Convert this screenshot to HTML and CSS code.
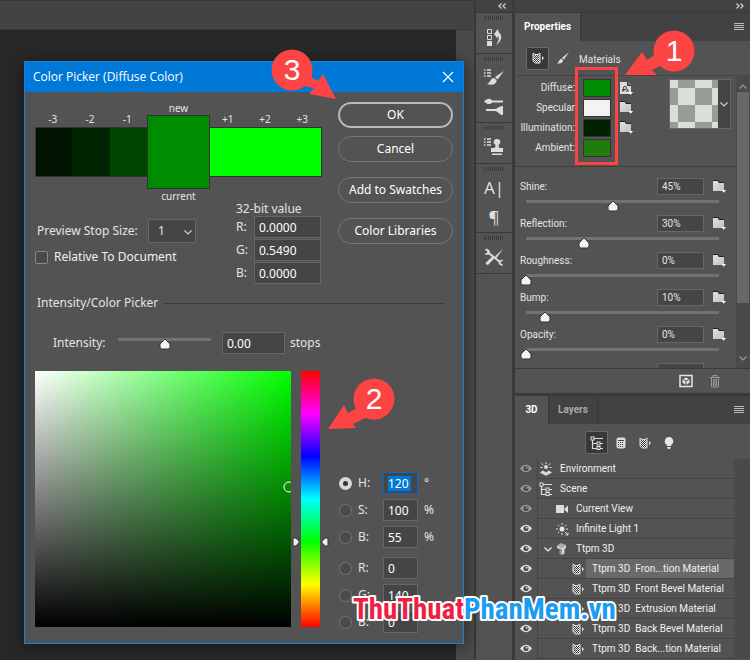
FILE: index.html
```
<!DOCTYPE html>
<html lang="en">
<head>
  <meta charset="UTF-8">
  <meta name="viewport" content="width=device-width, initial-scale=1.0">
  <title>Color Picker (Diffuse Color)</title>
  <link rel="stylesheet" href="styles.css">
</head>
<body>
  <!-- icon set -->
  <svg class="defs" aria-hidden="true">
    <defs>
      <pattern id="check" width="2" height="2" patternUnits="userSpaceOnUse">
        <rect width="2" height="2" fill="#333"/>
        <rect width="1" height="1" fill="#eee"/>
        <rect x="1" y="1" width="1" height="1" fill="#eee"/>
      </pattern>
      <linearGradient id="fold" x1="0" y1="0" x2="1" y2="1">
        <stop offset="0" stop-color="#e2e2e2"/>
        <stop offset="1" stop-color="#c0c0c0"/>
      </linearGradient>
      <symbol id="folder" viewBox="0 0 14 14">
        <path d="M1 1h5l1 2h5v8H1z" fill="url(#fold)"/>
        <path d="M1 .5h5l1 2h5" fill="none" stroke="#222"/>
        <path d="M9.500 10h4.500l-2.200 2.800z" fill="#fff"/>
      </symbol>
      <symbol id="texture" viewBox="0 0 14 14">
        <path d="M1 1h8l3 3v9H1z" fill="#dcdcdc"/>
        <path d="M8.500 1v3.500H12" fill="#555" stroke="#333"/>
        <circle cx="6" cy="7" r="1.600" fill="none" stroke="#444"/>
        <rect x="3" y="8" width="2.500" height="2.500" fill="#555"/>
        <path d="M7 10.500l1.500-3 1.500 3z" fill="#444"/>
        <path d="M9.500 11h4.500l-2.200 2.800z" fill="#fff"/>
      </symbol>
      <symbol id="material" viewBox="0 0 14 14">
        <path d="M2 2l2 1.500h3L9 2v10H4L2 10z" fill="url(#check)" stroke="#ddd"/>
        <path d="M11 5l2 2-2 2.500z" fill="#ddd"/>
      </symbol>
      <symbol id="mesh" viewBox="0 0 14 14">
        <rect x="2.500" y="1.500" width="9" height="11" rx="2" fill="#ddd"/>
        <path d="M4 4.500h6" stroke="#444"/>
        <path d="M4 6h1v1H4zM6 6h1v1H6zM8 6h1v1H8zM4 8h1v1H4zM6 8h1v1H6zM8 8h1v1H8zM4 10h1v1H4zM6 10h1v1H6zM8 10h1v1H8z" fill="#444"/>
      </symbol>
      <symbol id="bulb" viewBox="0 0 14 14">
        <path d="M7 1a4.200 4.200 0 0 0-2.500 7.600L5 10h4l.5-1.400A4.200 4.200 0 0 0 7 1zM5 11h4l-1 2H6z" fill="#e6e6e6"/>
      </symbol>
      <symbol id="tree" viewBox="0 0 14 14">
        <path d="M2.500 3.500v9H7M2.500 7.500H7M4 2.500h9M10 7.500h3M10 12.500h3" stroke="#ddd" fill="none" stroke-width="1.200"/>
        <rect x="1" y="1" width="3" height="3" fill="#444" stroke="#ddd"/>
        <rect x="7" y="6" width="3" height="3" fill="#444" stroke="#ddd"/>
        <rect x="7" y="10.500" width="3" height="3" fill="#444" stroke="#ddd"/>
      </symbol>
      <symbol id="brush" viewBox="0 0 14 14">
        <path d="M13 1L6 7l1.800 1.800zM5.300 7.700c-2.300.3-1.500 3-4.300 4.600 3 .8 6-.3 6-3z" fill="#ddd"/>
      </symbol>
      <symbol id="env" viewBox="0 0 14 14">
        <circle cx="7" cy="5" r="2" fill="#ddd"/>
        <path d="M7 0v2M2.500 1.500l1.800 1.500M11.500 1.500L9.700 3M1.500 5.500h2M10.500 5.500h2" stroke="#ddd"/>
        <path d="M1 10.500l3-2 3 2 3-2 3 2-6 3.200z" fill="#ddd"/>
      </symbol>
      <symbol id="camera" viewBox="0 0 14 14">
        <path d="M1 3h8v8H1zM9.500 6.500l3.500-3v7.500l-3.500-3z" fill="#ddd"/>
      </symbol>
      <symbol id="sun" viewBox="0 0 14 14">
        <circle cx="7" cy="7" r="2.500" fill="#e6e6e6"/>
        <path d="M7 1v2M7 11v2M1 7h2M11 7h2M2.800 2.800l1.400 1.400M11.200 2.800L9.800 4.200M2.800 11.200l1.400-1.400M9.800 9.800L13 13M13 10.500V13h-2.500" stroke="#ddd" fill="none"/>
      </symbol>
      <symbol id="extrude" viewBox="0 0 14 14">
        <path d="M2 3.500L6 1l5 2-4 3z" fill="#aaa"/>
        <path d="M2 3.500L7 6l4-3v3l-1.500 1v4.500L6.500 13V7.500L2 6z" fill="#d8d8d8"/>
        <path d="M4.500 7l2 .8V13l-2-1z" fill="#999"/>
      </symbol>
      <symbol id="eye" viewBox="0 0 14 10">
        <path d="M1 5q6-7.500 12 0-6 7.500-12 0z" fill="currentColor"/>
        <circle cx="7" cy="5" r="2.500" fill="#444"/>
        <circle cx="7.600" cy="4.300" r="1" fill="currentColor"/>
      </symbol>
      <symbol id="chevron" viewBox="0 0 10 10">
        <path d="M1.500 3.500L5 7l3.500-3.500" fill="none" stroke="currentColor" stroke-width="1.200"/>
      </symbol>
      <symbol id="arrows" viewBox="0 0 8 6">
        <path d="M.5.5L3 3 .5 5.500M4.500.5L7 3 4.500 5.500" fill="none" stroke="#ccc" stroke-width="1.300"/>
      </symbol>
      <symbol id="menu" viewBox="0 0 10 8">
        <path d="M0 .5h10M0 2.500h10M0 4.500h10M0 6.500h10" stroke="#bbb"/>
      </symbol>
      <symbol id="history" viewBox="0 0 20 20">
        <path d="M3.500 2.500h4v4h-4zM3.500 8.500h4v4h-4z" fill="none" stroke="#ddd"/>
        <path d="M3 14h5v5H3z" fill="#ddd"/>
        <path d="M10 7l4-5 .5 3c4.500 3.500 3.500 9-2.500 13 3-4.500 3.500-7.500 2-9.500l-.5 3z" fill="#ddd"/>
      </symbol>
      <symbol id="brushes" viewBox="0 0 20 20">
        <path d="M0 2h1.500M3 2h4M0 5h1.500M3 5h4M0 8h1.500M3 8h4" stroke="#ddd" stroke-width="1.300"/>
        <path d="M20 3l-9 6 2.500 2.500zM10 10c-4 0-3 4.500-7 6 5 2 10 0 9.500-4z" fill="#ddd"/>
      </symbol>
      <symbol id="mixer" viewBox="0 0 20 20">
        <path d="M0 4.500c3-3 5-3.500 8-1.500v3C5 8 3 7 0 4.500zM8 3.500h11v2H8zM2 12h9v2H2zM11 12c2 0 4-3 8-3v9c-4 0-5-4-8-4z" fill="#ddd"/>
      </symbol>
      <symbol id="stamp" viewBox="0 0 20 20">
        <path d="M0 2h1.500M3 2h4M0 5h1.500M3 5h4M0 8h1.500M3 8h4" stroke="#ddd" stroke-width="1.300"/>
        <path d="M13 2a3 3 0 0 1 2 5.500c-1 1 0 3.500 1 3.500h3v4H7v-4h3c1.500 0 2-2.500 1-3.500A3 3 0 0 1 13 2zM8 16.500h10V18H8z" fill="#ddd"/>
      </symbol>
      <symbol id="tools" viewBox="0 0 20 20">
        <path d="M4 5.500l12 9.500" stroke="#ddd" stroke-width="2" fill="none"/>
        <path d="M19 2l-8 7.500 1.500 1.500zM10.500 11l-2-1.500L2 15.500c-1 1 1 3 2.500 2z" fill="#ddd"/>
        <path d="M1 2.500l2.500 1.500v2L1 7C4 8.500 6 6.500 5.500 4.500 5 2.500 3 1.500 1 2.500zM19 13.500l-2.500 1v2l2.500 1.500c-2.500 1-4.500-1-4-2.500.5-2 2.500-3 4-2z" fill="#ddd" stroke="#ddd" stroke-width=".6"/>
      </symbol>
    </defs>
  </svg>

  <main class="app">
    <section class="workspace">
      <div class="options-bar"></div>
      <div class="canvas"><div class="canvas-scroll"></div></div>
    </section>

    <nav class="dock">
      <div class="strip"><svg class="flip"><use href="#arrows"/></svg></div>
      <div class="dock-group">
        <button title="History"><svg><use href="#history"/></svg></button>
      </div>
      <div class="dock-group two">
        <button title="Brush Settings"><svg><use href="#brushes"/></svg></button>
        <button title="Brushes"><svg><use href="#mixer"/></svg></button>
      </div>
      <div class="dock-group">
        <button title="Clone Source"><svg><use href="#stamp"/></svg></button>
      </div>
      <div class="dock-group two">
        <button title="Character">A|</button>
        <button title="Paragraph">¶</button>
      </div>
      <div class="dock-group">
        <button title="Tool Presets"><svg><use href="#tools"/></svg></button>
      </div>
    </nav>

    <aside class="panels">
      <div class="strip"><svg><use href="#arrows"/></svg></div>

      <section class="panel properties">
        <div class="tabs">
          <button class="tab active">Properties</button>
          <button class="menu" title="Menu"><svg><use href="#menu"/></svg></button>
        </div>
        <div class="tools">
          <button class="tool on" title="Material"><svg><use href="#material"/></svg></button>
          <button class="tool" title="Brush"><svg><use href="#brush"/></svg></button>
          <span class="tools-title">Materials</span>
        </div>
        <div class="scroll-area">
          <div class="scroll-content">
            <div class="materials">
              <div class="colors">
                <span class="name">Diffuse:</span><button class="swatch diffuse" title="Diffuse"></button><svg class="ico"><use href="#texture"/></svg>
                <span class="name">Specular</span><button class="swatch specular" title="Specular"></button><svg class="ico"><use href="#folder"/></svg>
                <span class="name">Illumination:</span><button class="swatch illumination" title="Illumination"></button><svg class="ico"><use href="#folder"/></svg>
                <span class="name">Ambient:</span><button class="swatch ambient" title="Ambient"></button>
              </div>
              <button class="preset" title="Material presets">
                <span class="preset-thumb"></span>
                <svg class="chev"><use href="#chevron"/></svg>
              </button>
            </div>
            <div class="sliders">
              <div class="slider">
                <label for="shine">Shine:</label><input type="text" value="45%" aria-label="Shine value"><svg class="ico"><use href="#folder"/></svg>
                <input type="range" id="shine" value="45">
              </div>
              <div class="slider">
                <label for="reflection">Reflection:</label><input type="text" value="30%" aria-label="Reflection value"><svg class="ico"><use href="#folder"/></svg>
                <input type="range" id="reflection" value="30">
              </div>
              <div class="slider">
                <label for="roughness">Roughness:</label><input type="text" value="0%" aria-label="Roughness value"><svg class="ico"><use href="#folder"/></svg>
                <input type="range" id="roughness" value="0">
              </div>
              <div class="slider">
                <label for="bump">Bump:</label><input type="text" value="10%" aria-label="Bump value"><svg class="ico"><use href="#folder"/></svg>
                <input type="range" id="bump" value="10">
              </div>
              <div class="slider">
                <label for="opacity">Opacity:</label><input type="text" value="0%" aria-label="Opacity value"><svg class="ico"><use href="#folder"/></svg>
                <input type="range" id="opacity" value="0">
              </div>
              <div class="slider">
                <label></label><input type="text" aria-label="Next value">
              </div>
            </div>
          </div>
          <div class="scrollbar">
            <svg class="chev up"><use href="#chevron"/></svg>
            <div class="scroll-thumb"></div>
            <svg class="chev"><use href="#chevron"/></svg>
          </div>
        </div>
        <div class="panel-foot">
          <button title="Render">
            <svg viewBox="0 0 14 14"><rect x="1" y="1.500" width="12" height="11" fill="none" stroke="#e6e6e6" stroke-width="1.500"/><path d="M7 3.500l3.500 1.700v3.600L7 11 3.500 8.800V5.200z" fill="#e6e6e6"/><path d="M4 5.500l3 1.300 3-1.300M7 7v4" stroke="#555" fill="none"/></svg>
          </button>
          <button title="Delete">
            <svg viewBox="0 0 14 14"><path d="M2 3.500h10M5 3V1.500h4V3M3.500 4v9h7V4M5.500 5v7M7 5v7M8.500 5v7" fill="none" stroke="#999"/></svg>
          </button>
        </div>

        <div class="mark-box"></div>
        <svg class="callout callout-1" viewBox="0 0 72 68">
          <path d="M1 52L18 29l5 8 14-9 6 12-15 7 5 5z"/>
          <circle cx="50" cy="28" r="20.500"/>
          <text x="50" y="38">1</text>
        </svg>
      </section>

      <section class="panel layers-3d">
        <div class="tabs">
          <button class="tab active">3D</button>
          <button class="tab">Layers</button>
          <button class="menu" title="Menu"><svg><use href="#menu"/></svg></button>
        </div>
        <div class="tools filters">
          <button class="tool on" title="Scene"><svg><use href="#tree"/></svg></button>
          <button class="tool" title="Meshes"><svg><use href="#mesh"/></svg></button>
          <button class="tool" title="Materials"><svg><use href="#material"/></svg></button>
          <button class="tool" title="Lights"><svg><use href="#bulb"/></svg></button>
        </div>
        <div class="tree">
          <ul>
            <li class="dim"><svg class="eye"><use href="#eye"/></svg><div class="item"><svg><use href="#env"/></svg>Environment</div></li>
            <li class="dim"><svg class="eye"><use href="#eye"/></svg><div class="item"><svg><use href="#tree"/></svg>Scene</div></li>
            <li class="dim"><svg class="eye"><use href="#eye"/></svg><div class="item level-1"><svg><use href="#camera"/></svg>Current View</div></li>
            <li><svg class="eye"><use href="#eye"/></svg><div class="item level-1"><svg><use href="#sun"/></svg>Infinite Light 1</div></li>
            <li><svg class="eye"><use href="#eye"/></svg><div class="item group"><svg><use href="#chevron"/></svg><svg><use href="#extrude"/></svg>Ttpm 3D</div></li>
            <li class="selected"><svg class="eye"><use href="#eye"/></svg><div class="item level-2"><svg><use href="#material"/></svg><span>Ttpm 3D&nbsp; Fron...tion Material</span></div></li>
            <li><svg class="eye"><use href="#eye"/></svg><div class="item level-2"><svg><use href="#material"/></svg><span>Ttpm 3D&nbsp; Front Bevel Material</span></div></li>
            <li><svg class="eye"><use href="#eye"/></svg><div class="item level-2"><svg><use href="#material"/></svg><span>Ttpm 3D&nbsp; Extrusion Material</span></div></li>
            <li><svg class="eye"><use href="#eye"/></svg><div class="item level-2"><svg><use href="#material"/></svg><span>Ttpm 3D&nbsp; Back Bevel Material</span></div></li>
            <li><svg class="eye"><use href="#eye"/></svg><div class="item level-2"><svg><use href="#material"/></svg><span>Ttpm 3D&nbsp; Back...tion Material</span></div></li>
          </ul>
          <div class="tree-scroll"></div>
        </div>
      </section>
    </aside>

    <form class="dialog">
      <header class="title-bar">
        <h1>Color Picker (Diffuse Color)</h1>
        <button type="button" title="Close">
          <svg viewBox="0 0 12 12"><path d="M1 1l10 10M11 1L1 11" stroke="#fff" stroke-width="1.200"/></svg>
        </button>
      </header>

      <div class="dialog-body">
        <div class="top">
          <div class="settings">
            <div class="ladder">
              <div class="step"><span>-3</span><i class="m3"></i></div>
              <div class="step"><span>-2</span><i class="m2"></i></div>
              <div class="step"><span>-1</span><i class="m1"></i></div>
              <div class="current"><span>new</span><i></i><span>current</span></div>
              <div class="step"><span>+1</span><i></i></div>
              <div class="step"><span>+2</span><i></i></div>
              <div class="step last"><span>+3</span><i></i></div>
            </div>
            <div class="below">
              <div class="stop-size">
                <div class="line">
                  <label for="stop">Preview Stop Size:</label>
                  <div class="select"><select id="stop"><option>1</option></select><svg class="chev"><use href="#chevron"/></svg></div>
                </div>
                <label class="relative"><input type="checkbox">Relative To Document</label>
              </div>
              <div class="bits">
                <span>32-bit value</span>
                <label>R:<input type="text" value="0.0000"></label>
                <label>G:<input type="text" value="0.5490"></label>
                <label>B:<input type="text" value="0.0000"></label>
              </div>
            </div>
          </div>
          <div class="buttons">
            <button type="button" class="primary">OK</button>
            <button type="button">Cancel</button>
            <button type="button" class="apart">Add to Swatches</button>
            <button type="button" class="apart">Color Libraries</button>
          </div>
        </div>

        <h2>Intensity/Color Picker</h2>
        <div class="intensity">
          <label for="intensity">Intensity:</label>
          <input type="range" id="intensity" value="50">
          <input type="text" value="0.00" aria-label="Stops">
          <span>stops</span>
        </div>

        <div class="picker">
          <div class="field"><svg viewBox="0 0 12 12"><circle cx="6" cy="6" r="5" fill="none" stroke="#fff"/></svg></div>
          <div class="hue">
            <svg class="pointer left" viewBox="0 0 8 10"><path d="M1 1h3l3.500 4L4 9H1z" fill="#eee" stroke="#333"/></svg>
            <svg class="pointer right" viewBox="0 0 8 10"><path d="M7 1H4L.5 5 4 9h3z" fill="#eee" stroke="#333"/></svg>
          </div>
          <div class="channels">
            <div class="channel"><input type="radio" name="ch" id="h" checked><label for="h">H:</label><input type="text" class="focus" value="120" aria-label="Hue"><span>°</span></div>
            <div class="channel"><input type="radio" name="ch" id="s"><label for="s">S:</label><input type="text" value="100" aria-label="Saturation"><span>%</span></div>
            <div class="channel"><input type="radio" name="ch" id="v"><label for="v">B:</label><input type="text" value="55" aria-label="Brightness"><span>%</span></div>
            <div class="channel rgb"><input type="radio" name="ch" id="r"><label for="r">R:</label><input type="text" value="0" aria-label="Red"></div>
            <div class="channel"><input type="radio" name="ch" id="g"><label for="g">G:</label><input type="text" value="140" aria-label="Green"></div>
            <div class="channel"><input type="radio" name="ch" id="b"><label for="b">B:</label><input type="text" value="0" aria-label="Blue"></div>
          </div>
        </div>
      </div>

      <svg class="callout callout-3" viewBox="0 0 68 54">
        <path d="M66 51L53 26l-5 7-15-9-5 13 16 3-5 6z"/>
        <circle cx="22" cy="22" r="20.500"/>
        <text x="22" y="32">3</text>
      </svg>
      <svg class="callout callout-2" viewBox="0 0 70 54">
        <path d="M2 51l16-24 4 8 12-7 7 11-14 7 3 4z"/>
        <circle cx="48" cy="21" r="20.500"/>
        <text x="48" y="31">2</text>
      </svg>
    </form>

    <svg class="watermark" viewBox="0 0 280 40">
      <text x="3" y="29"><tspan class="wm-red">ThuThuat</tspan><tspan class="wm-blue">PhanMem.vn</tspan></text>
    </svg>
  </main>
</body>
</html>
```
FILE: styles.css
```
*{
  box-sizing: border-box;
  margin: 0;
  padding: 0;
}

body{
  background: #282828;
  color: #e4e4e4;
  font: 10px/14px Roboto, "Liberation Sans", sans-serif;
}

button, input, select{
  font: inherit;
  color: inherit;
  background: none;
  border: 0;
}

svg{
  display: block;
  flex: none;
}

.defs{
  position: absolute;
  width: 0;
  height: 0;
}

.app{
  position: relative;
  display: flex;
  min-height: 100vh;
  overflow: hidden;
}

/* workspace */
.workspace{
  flex: 1;
  display: flex;
  flex-direction: column;
}

.options-bar{
  height: 30px;
  background: #434343;
  border-top: 1px solid #353535;
  border-bottom: 1px solid #383838;
}

.canvas{
  flex: 1;
  display: flex;
  justify-content: flex-end;
}

.canvas-scroll{
  width: 18px;
  background: #4a4a4a;
}

/* icon dock */
.dock{
  width: 41px;
  background: #535353;
  border-left: 2px solid #383838;
  border-right: 3px solid #3a3a3a;
}

.strip{
  display: flex;
  align-items: center;
  justify-content: flex-end;
  height: 13px;
  padding-right: 6px;
  background: #424242;
  border-bottom: 1px solid #383838;
}

.strip svg{
  width: 8px;
  height: 6px;
}

.flip{
  transform: scaleX(-1);
}

.dock-group{
  display: flex;
  flex-direction: column;
  align-items: center;
  gap: 5px;
  padding: 12px 0 4px;
  border-bottom: 1px solid #383838;
  background: repeating-linear-gradient(to right, #3c3c3c 0 1px, transparent 1px 2px) center 3px / 20px 4px no-repeat;
}

.dock-group.two{
  padding-bottom: 3px;
}

.dock-group button{
  height: 24px;
  color: #ddd;
  font: 17px/20px "Noto Sans", sans-serif;
}

.dock-group svg{
  width: 20px;
  height: 20px;
}

/* panels */
.panels{
  width: 235px;
  background: #535353;
}

.panel{
  position: relative;
}

.tabs{
  display: flex;
  height: 28px;
  background: #424242;
}

.tab{
  min-width: 34px;
  padding: 0 9px;
  color: #aaa;
  font-weight: bold;
  border-right: 1px solid #383838;
}

.tab.active{
  background: #535353;
  color: #fff;
}

.menu{
  margin-left: auto;
  padding: 0 6px;
}

.menu svg{
  width: 10px;
  height: 8px;
}

.tools{
  display: flex;
  align-items: center;
  gap: 2px;
  height: 34px;
  padding: 0 11px;
}

.tool{
  width: 23px;
  height: 23px;
  border-radius: 2px;
  display: flex;
  align-items: center;
  justify-content: center;
}

.tool.on{
  background: #383838;
  border: 1px solid #6a6a6a;
}

.tool svg{
  width: 14px;
  height: 14px;
}

.tools-title{
  padding: 4px 0 0 3px;
}

.ico{
  width: 14px;
  height: 14px;
}

.chev{
  width: 10px;
  height: 10px;
  color: #ccc;
}

.scroll-area{
  display: flex;
  height: 293px;
}

.scroll-content{
  flex: 1;
  overflow: hidden;
  border-top: 1px solid #444;
}

.materials{
  display: flex;
  justify-content: space-between;
  height: 91px;
  padding: 3px 5px 0;
  border-bottom: 1px solid #414141;
}

.colors{
  display: grid;
  grid-template-columns: 55px 28px 14px;
  grid-auto-rows: 18px;
  column-gap: 8px;
  row-gap: 2px;
  align-items: center;
  align-content: start;
}

.name{
  text-align: right;
  white-space: nowrap;
}

.swatch{
  height: 18px;
  border: 1px solid #333;
}

.diffuse{ background: #008c00; }
.specular{ background: #f3f3f3; }
.illumination{ background: #002000; }
.ambient{ background: #217c0e; }

.preset{
  display: flex;
  align-items: center;
  gap: 1px;
  width: 62px;
  height: 50px;
  background: #444;
  border: 1px solid #666;
}

.preset-thumb{
  width: 48px;
  height: 48px;
  background: conic-gradient(#969d96 25%, #d8e0d8 0 50%, #969d96 0 75%, #d8e0d8 0) 8px 8px / 34px 34px;
}

.sliders{
  padding: 11px 10px 0 5px;
}

.slider{
  display: grid;
  grid-template-columns: 1fr 47px 14px;
  column-gap: 8px;
  align-items: center;
  height: 37px;
  align-content: start;
}

.slider input[type=text]{
  height: 17px;
  padding-left: 4px;
  background: #454545;
  border: 1px solid #666;
}

input[type=range]{
  appearance: none;
  height: 15px;
  background: linear-gradient(#727272, #727272) center top / calc(100% - 12px) 3px no-repeat;
}

.slider input[type=range]{
  grid-column: 1 / -1;
  margin: 5px 0 0;
  width: 205px;
}

input[type=range]::-webkit-slider-runnable-track{
  height: 15px;
}

input[type=range]::-webkit-slider-thumb{
  appearance: none;
  width: 12px;
  height: 12px;
  background: url("data:image/svg+xml,%3Csvg xmlns='http://www.w3.org/2000/svg' viewBox='0 0 12 12'%3E%3Cpath d='M6 1L11 6v3q0 2-2 2H3q-2 0-2-2V6z' fill='%23f2f2f2' stroke='%23333'/%3E%3C/svg%3E");
}

.scrollbar{
  width: 14px;
  display: flex;
  flex-direction: column;
  align-items: center;
  padding: 7px 0 5px;
  background: #4a4a4a;
}

.scrollbar .chev{
  color: #999;
}

.scrollbar .up{
  transform: rotate(180deg);
}

.scroll-thumb{
  width: 12px;
  height: 211px;
  margin-bottom: auto;
  background: #686868;
}

.panel-foot{
  display: flex;
  justify-content: flex-end;
  align-items: center;
  gap: 15px;
  height: 25px;
  padding-right: 28px;
  border-top: 1px solid #3a3a3a;
}

.panel-foot svg{
  width: 14px;
  height: 14px;
}

/* 3D list */
.layers-3d{
  border-top: 3px solid #3a3a3a;
}

.layers-3d .tool:nth-child(n+2){
  width: 22px;
}

.filters{
  height: 35px;
  justify-content: center;
  padding: 2px 0 0;
}

.tree{
  display: flex;
}

.tree ul{
  flex: 1;
  list-style: none;
}

.tree-scroll{
  width: 16px;
  background: #4a4a4a;
}

.tree li{
  display: flex;
  align-items: stretch;
  height: 20px;
}

.eye{
  width: 14px;
  height: 19px;
  margin: 0 4px;
  color: #e0e0e0;
}

.dim .eye{
  color: #999;
}

.item{
  flex: 1;
  display: flex;
  align-items: center;
  gap: 7px;
  padding-left: 1px;
  border-left: 1px solid #444;
  border-bottom: 1px solid #454545;
  color: #f0f0f0;
  white-space: nowrap;
}

.item svg{
  width: 14px;
  height: 14px;
}

.level-1{ padding-left: 17px; }

.group{
  padding-left: 5px;
}

.group svg:first-child{
  width: 10px;
  margin-right: -5px;
}

.level-2{
  padding-left: 33px;
  gap: 1px;
}

.level-2 span{
  flex: 1;
  align-self: stretch;
  padding-left: 6px;
  line-height: 19px;
}

.selected span{
  background: #696969;
}

/* dialog */
.dialog{
  position: absolute;
  left: 24px;
  top: 61px;
  width: 440px;
  border: 1px solid #1681dc;
  background: #535353;
  box-shadow: 0 2px 14px rgba(0, 0, 0, .5);
  font: 12px/16px "Noto Sans", "Open Sans", sans-serif;
}

.title-bar{
  display: flex;
  justify-content: space-between;
  align-items: center;
  height: 30px;
  padding: 0 9px 0 8px;
  background: #0078d7;
  color: #fff;
}

.title-bar h1{
  font: 12px/16px "Open Sans", "Noto Sans", sans-serif;
}

.title-bar svg{
  width: 12px;
  height: 12px;
}

.dialog-body{
  padding: 9px 10px 10px;
}

.top{
  display: flex;
  gap: 16px;
}

.settings{
  width: 287px;
}

.ladder{
  display: flex;
  align-items: center;
  font-size: 10px;
  line-height: 14px;
  text-align: center;
}

.step{
  flex: 1;
  padding-bottom: 16px;
}

.step span{
  display: block;
  height: 16px;
  padding-right: 2px;
  line-height: 16px;
}

.step i{
  display: block;
  height: 50px;
  background: #0f0;
  border: 1px solid #333;
  border-width: 1px 0;
}

.last i{
  border-right-width: 1px;
}

.step .m3{ background: #001200; border-left-width: 1px; }
.step .m2{ background: #002400; }
.step .m1{ background: #004600; }

.current{
  width: 63px;
}

.current span{
  display: block;
  height: 14px;
}

.current i{
  display: block;
  height: 74px;
  background: #008c00;
  border: 1px solid #333;
}

.below{
  display: flex;
  justify-content: space-between;
}

.stop-size{
  padding-top: 16px;
}

.line{
  display: flex;
  align-items: center;
  justify-content: space-between;
  width: 161px;
  padding-left: 2px;
}

.select{
  position: relative;
}

.select select{
  appearance: none;
  display: block;
  width: 48px;
  height: 24px;
  padding-left: 9px;
  background: #454545;
  border: 1px solid #666;
  border-radius: 2px;
}

.select .chev{
  position: absolute;
  right: 3px;
  top: 8px;
  pointer-events: none;
}

.relative{
  display: flex;
  align-items: center;
  gap: 6px;
  margin-top: 6px;
  color: #f0f0f0;
}

.relative input{
  appearance: none;
  width: 13px;
  height: 13px;
  border: 1px solid #8a8a8a;
  border-radius: 2px;
  background: #4a4a4a;
}

.bits{
  display: flex;
  flex-direction: column;
  gap: 1px;
  width: 85px;
  margin-right: 1px;
}

.bits span{
  line-height: 12px;
}

.bits label{
  display: flex;
  align-items: center;
  justify-content: space-between;
}

.bits input{
  width: 67px;
}

.dialog input[type=text]{
  height: 22px;
  padding-left: 4px;
  background: #454545;
  border: 1px solid #666;
  color: #fff;
}

.buttons{
  flex: 1;
  display: flex;
  flex-direction: column;
  gap: 8px;
  padding-top: 1px;
}

.buttons button{
  height: 26px;
  border: 1px solid #757575;
  border-radius: 13px;
  color: #fff;
}

.buttons .primary{
  border: 2px solid #b8b8b8;
}

.buttons .apart{
  margin-top: 7px;
}

.dialog h2{
  display: flex;
  align-items: center;
  gap: 5px;
  margin: 11px 9px 0 2px;
  font-size: 12px;
  font-weight: normal;
}

.dialog h2::after{
  content: "";
  flex: 1;
  border-top: 1px solid #3e3e3e;
}

.intensity{
  display: flex;
  align-items: center;
  gap: 5px;
  margin: 21px 0 17px 18px;
}

.intensity label{
  width: 54px;
}

.intensity input[type=range]{
  width: 105px;
  margin-top: 5px;
}

.intensity input[type=text]{
  width: 63px;
}

.picker{
  display: flex;
  align-items: flex-start;
}

.field{
  position: relative;
  width: 256px;
  height: 256px;
  overflow: hidden;
  background: linear-gradient(to top, #000, transparent), linear-gradient(to right, #fff, #0f0);
}

.field svg{
  position: absolute;
  right: -4px;
  top: 110px;
  width: 12px;
  height: 12px;
}

.hue{
  position: relative;
  width: 19px;
  height: 256px;
  margin: 0 19px 0 10px;
  background: linear-gradient(#f00, #f0f, #00f, #0ff, #0f0, #ff0, #f00);
}

.pointer{
  position: absolute;
  top: 166px;
  width: 8px;
  height: 10px;
}

.left{ right: 20px; }
.right{ left: 20px; }

.channels{
  display: flex;
  flex-direction: column;
  gap: 5px;
  padding-top: 101px;
}

.channel{
  display: flex;
  align-items: center;
}

.channel.rgb{
  margin-top: 4px;
}

.channel label{
  width: 25px;
  margin-left: 6px;
}

.channel input[type=text]{
  width: 35px;
}

.channel span{
  margin-left: 6px;
}

.channel input[type=radio]{
  appearance: none;
  width: 13px;
  height: 13px;
  border: 1px solid #777;
  border-radius: 50%;
  background: #4a4a4a;
}

.channel input[type=radio]:checked{
  border: 4px solid #d8d8d8;
  background: #333;
}

.dialog .channel .focus{
  border: 1px solid #0a64d8;
  background: linear-gradient(#0078d7, #0078d7) 4px center / 23px 15px no-repeat #454545;
}

/* callouts */
.mark-box{
  position: absolute;
  left: 60px;
  top: 54px;
  width: 43px;
  height: 98px;
  border: 3px solid #fc4444;
}

.callout{
  position: absolute;
  fill: #fc4444;
}

.callout text{
  fill: #fff;
  font: 30px "Liberation Sans", sans-serif;
  text-anchor: middle;
}

.callout-1{
  left: 109px;
  top: 10px;
  width: 72px;
  height: 68px;
}

.callout-2{
  left: 301px;
  top: 316px;
  width: 70px;
  height: 54px;
}

.callout-3{
  left: 245px;
  top: -14px;
  width: 68px;
  height: 54px;
}

.watermark{
  position: absolute;
  left: 350px;
  top: 590px;
  width: 280px;
  height: 40px;
}

.watermark text{
  font: bold 29px "Roboto Condensed", Roboto, sans-serif;
  stroke: #fff;
  stroke-width: 4px;
  stroke-linejoin: round;
  paint-order: stroke;
}

.wm-red{ fill: #f01f45; }
.wm-blue{ fill: #1b9cf2; }
```
